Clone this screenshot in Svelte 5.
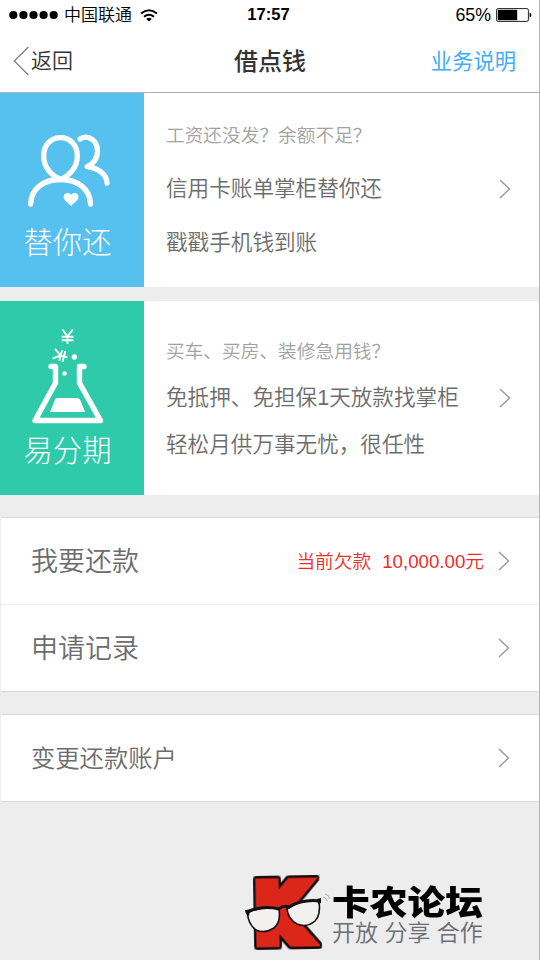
<script>
  const offers = [
    {
      icon: 'people',
      label: '替你还',
      hint: '工资还没发？余额不足？',
      lines: ['信用卡账单掌柜替你还', '戳戳手机钱到账'],
    },
    {
      icon: 'flask',
      label: '易分期',
      hint: '买车、买房、装修急用钱？',
      lines: ['免抵押、免担保1天放款找掌柜', '轻松月供万事无忧，很任性'],
    },
  ];
</script>

{#snippet chevron()}
  <svg class="chevron" viewBox="0 0 12 20" width="12" height="20">
    <path d="M1 1 L10.5 10 L1 19" />
  </svg>
{/snippet}

<div class="screen">
  <div class="status">
    <div class="carrier">
      <svg class="signal" width="50" height="10" viewBox="0 0 50 10">
        {#each [0, 1, 2, 3, 4] as i}
          <circle cx={4.3 + i * 10.1} cy="5" r="4.1" />
        {/each}
      </svg>
      <span>中国联通</span>
      <svg class="wifi" width="18" height="13" viewBox="0 0 18 13">
        <path d="M1 4.6 Q9 -2 17 4.6" />
        <path d="M4 7.8 Q9 3.6 14 7.8" />
        <path class="dot" d="M6.2 9.9 Q9 7.8 11.8 9.9 L9 12.6 Z" />
      </svg>
    </div>
    <div class="time">17:57</div>
    <div class="power">
      <span>65%</span>
      <svg width="36" height="14" viewBox="0 0 36 14">
        <rect class="shell" x="0.6" y="0.6" width="31.8" height="12.8" rx="1.5" />
        <rect x="1.8" y="1.8" width="19.4" height="10.4" />
        <path d="M33.6 4.4 Q35.4 5 35.4 7 Q35.4 9 33.6 9.6 Z" />
      </svg>
    </div>
  </div>

  <header class="nav">
    <div class="back">
      <svg width="16" height="30" viewBox="0 0 16 30">
        <path d="M15.4 1 L1.3 15 L15.4 29" />
      </svg>
      <span>返回</span>
    </div>
    <h1>借点钱</h1>
    <div class="help">业务说明</div>
  </header>

  {#each offers as offer}
    <section class="offer {offer.icon}">
      <div class="tile">
        {#if offer.icon === 'people'}
          <svg width="144" height="129" viewBox="0 0 144 129">
            <g class="line">
              <path d="M60.500 86.500 C52 83 43.700 75 43.700 63 C43.700 52 51 44.600 60.500 44.600 C70 44.600 77.300 52 77.300 63 C77.300 75 69 83 60.500 86.500 Z" />
              <path d="M30.700 111 C31 96 43 86.500 60.500 86.500 C78 86.500 90 96 90.500 111" />
              <path d="M80 46 C89 40.500 97.500 48.500 97.500 58 C97.500 66 93 71 87.200 73.600 C98 75 106.500 81 107 90" />
            </g>
            <path class="fill" d="M71 113 C67 109 63.700 107.500 63.700 103.800 C63.700 99.800 68.800 98.800 71 102 C73.200 98.800 78.500 99.800 78.500 103.800 C78.500 107.500 75 109 71 113 Z" />
          </svg>
        {:else}
          <svg width="144" height="129" viewBox="0 0 144 129">
            <g class="yen">
              <path d="M62.500 28.500 L67.500 35.500 L72.700 28.500 M67.500 35.500 V43 M61.700 35.700 H73.500 M61.700 39.200 H73.500" />
              <path transform="translate(60.500 54.500) rotate(-75)" d="M-5 -7 L0 0 L5 -7 M0 0 V7.300 M-5.500 0.200 H5.500 M-5.500 3.600 H5.500" />
            </g>
            <path class="glass" d="M51 65.500 H55.500 V82 L35 119.500 H100.500 L79.500 82 V65.500 H84" />
            <path class="fill" d="M56.500 97 H77 Q79.500 97 80.500 99.500 L85 111 H50 L54.500 100 Q55.500 97 56.500 97 Z" />
            <circle class="fill" cx="74.300" cy="56" r="2.700" />
            <circle class="fill" cx="64.600" cy="72.500" r="2.300" />
          </svg>
        {/if}
        <span>{offer.label}</span>
      </div>
      <div class="text">
        <p class="hint">{offer.hint}</p>
        {#each offer.lines as line}
          <p>{line}</p>
        {/each}
      </div>
      {@render chevron()}
    </section>
  {/each}

  <div class="group">
    <div class="row">
      <span>我要还款</span>
      <div class="debt"><span>当前欠款</span><span>10,000.00元</span></div>
      {@render chevron()}
    </div>
    <div class="row">
      <span>申请记录</span>
      {@render chevron()}
    </div>
  </div>

  <div class="group account">
    <div class="row">
      <span>变更还款账户</span>
      {@render chevron()}
    </div>
  </div>

  <footer>
    <svg class="brand" width="90" height="90" viewBox="242 870 90 90">
      <text class="k" transform="translate(256 941) rotate(-1) scale(0.85 1)" x="0" y="0">K</text>
      <g class="glasses">
        <path class="lens" d="M247.500 913 Q263 905 279 909 Q281 922 274 928 Q265 934 256 930 Q248 924 247.500 913 Z" />
        <path class="lens" d="M287 909 Q301 899 319 901 Q321 915 315 921 Q307 928 297 924 Q288 919 287 909 Z" />
        <path class="brow" d="M246 912 Q263 905 279 909 Q283 905 289 907 Q302 899 320 901" />
        <path class="hinge" d="M245 910 L250 910 L249 916 L246 914 Z M317 899 L321 898 L321 903 L318 904 Z" />
      </g>
      <path class="spark" d="M323 897 Q326 897 327 901 M325 894 Q329 895 330 899" />
    </svg>
    <div class="brand-text">
      <strong>卡农论坛</strong>
      <span>开放 分享 合作</span>
    </div>
  </footer>
</div>

<style>
  :global(body) {
    margin: 0;
  }
  .screen {
    box-sizing: border-box;
    width: 540px;
    height: 960px;
    overflow: hidden;
    display: flex;
    flex-direction: column;
    background: #ededed;
    border-right: 1px solid #b4b4b4;
    font-family: "Liberation Sans", "Noto Sans CJK SC", sans-serif;
    font-weight: 350;
    color: #6c6c6c;
  }
  svg {
    display: block;
    flex: none;
  }
  p,
  h1 {
    margin: 0;
  }

  .status {
    display: grid;
    grid-template-columns: 1fr auto 1fr;
    align-items: center;
    height: 30px;
    padding: 0 7px 0 9px;
    background: #fff;
    color: #000;
    font-size: 17px;
    line-height: 30px;
  }
  .carrier,
  .power {
    display: flex;
    align-items: center;
  }
  .carrier span {
    padding-top: 2px;
    line-height: 28px;
  }
  .signal {
    margin-right: 5px;
  }
  .wifi {
    margin-left: 8px;
    fill: none;
    stroke: #000;
    stroke-width: 2;
  }
  .wifi .dot {
    fill: #000;
    stroke: none;
  }
  .time {
    padding-right: 4px;
    font-weight: 700;
    font-size: 16.6px;
  }
  .power {
    justify-content: flex-end;
    gap: 5px;
    font-size: 17.8px;
  }
  .shell {
    fill: none;
    stroke: #222;
  }

  .nav {
    display: grid;
    grid-template-columns: 1fr auto 1fr;
    align-items: center;
    height: 62px;
    padding: 0 23px 0 13px;
    background: #fff;
    border-bottom: 1px solid #b0b0b0;
    color: #333;
    line-height: 62px;
  }
  .back {
    display: flex;
    align-items: center;
    gap: 2px;
    font-size: 21px;
  }
  .back path {
    fill: none;
    stroke: #808080;
    stroke-width: 1.3;
  }
  h1 {
    padding: 2px 0 0 11px;
    font-size: 24px;
    line-height: 60px;
    font-weight: 500;
  }
  .help {
    padding-top: 2px;
    font-size: 21.3px;
    line-height: 60px;
    font-weight: 400;
    color: #3fadf5;
    text-align: right;
  }

  .offer {
    display: flex;
    align-items: center;
    height: 194px;
    background: #fff;
  }
  .flask {
    margin-top: 14px;
  }
  .tile {
    width: 144px;
    height: 194px;
    display: flex;
    flex-direction: column;
    align-items: center;
    background: #56c0ef;
    color: #fff;
    font-size: 29.3px;
    font-weight: 300;
    line-height: 42px;
  }
  .flask .tile {
    background: #2fcaa9;
  }
  .tile span {
    margin-right: 9px;
  }
  .line {
    fill: none;
    stroke: #fff;
    stroke-width: 5.3;
    stroke-linecap: round;
    stroke-linejoin: round;
  }
  .glass {
    fill: none;
    stroke: #fff;
    stroke-width: 5.4;
    stroke-linecap: round;
    stroke-linejoin: round;
  }
  .yen {
    fill: none;
    stroke: #fff;
    stroke-width: 1.9;
  }
  .fill {
    fill: #fff;
  }
  .text {
    flex: 1;
    padding: 0 0 1px 22px;
    font-size: 21.6px;
    line-height: 54px;
    white-space: nowrap;
  }
  .text .hint {
    font-size: 18.7px;
    line-height: 52px;
    color: #a2a2a2;
  }
  .flask .text {
    padding-top: 2px;
    line-height: 47px;
  }
  .flask .text .hint {
    line-height: 44px;
  }
  .chevron {
    margin-right: 28px;
    fill: none;
    stroke: #999;
    stroke-width: 1.4;
  }
  .people .chevron {
    margin-bottom: 2px;
  }

  .group {
    margin: 22px 0 0 1px;
    background: #fff;
    border: 1px solid #d9d9d9;
    border-width: 1px 0;
  }
  .row {
    display: flex;
    align-items: center;
    height: 86px;
    padding-left: 30px;
    font-size: 27px;
  }
  .row + .row {
    border-top: 1px solid #eee;
  }
  .row > span {
    flex: 1;
    padding-bottom: 3px;
  }
  .row .chevron {
    margin-right: 29px;
  }
  .debt {
    display: flex;
    gap: 11px;
    margin-right: 14px;
    padding-bottom: 3px;
    color: #ee2b2b;
    font-size: 18.7px;
  }
  .account .row {
    font-size: 24.3px;
  }

  footer {
    display: flex;
    margin: 68px 0 0 242px;
  }
  .k {
    font: 700 76px "DejaVu Sans", sans-serif;
    fill: #dc2619;
    stroke: #dc2619;
    stroke-width: 13;
    filter: drop-shadow(2px 0 0 #0b0b0b) drop-shadow(-2px 0 0 #0b0b0b)
      drop-shadow(0 2px 0 #0b0b0b) drop-shadow(0 -2px 0 #0b0b0b);
  }
  .lens {
    fill: #f3f1f0;
    stroke: #111;
    stroke-width: 1.6;
  }
  .brow {
    fill: none;
    stroke: #111;
    stroke-width: 3;
  }
  .hinge {
    fill: #111;
  }
  .spark {
    fill: none;
    stroke: #aaa;
    stroke-width: 1;
  }
  .brand-text {
    display: flex;
    flex-direction: column;
    align-items: flex-start;
    padding-top: 14px;
    white-space: nowrap;
  }
  .brand-text strong {
    font-size: 34px;
    font-weight: 900;
    line-height: 38px;
    color: #000;
    transform: scaleX(1.11);
    transform-origin: left;
  }
  .brand-text span {
    font-size: 23px;
    line-height: 22px;
    color: #6a6e74;
  }
</style>
